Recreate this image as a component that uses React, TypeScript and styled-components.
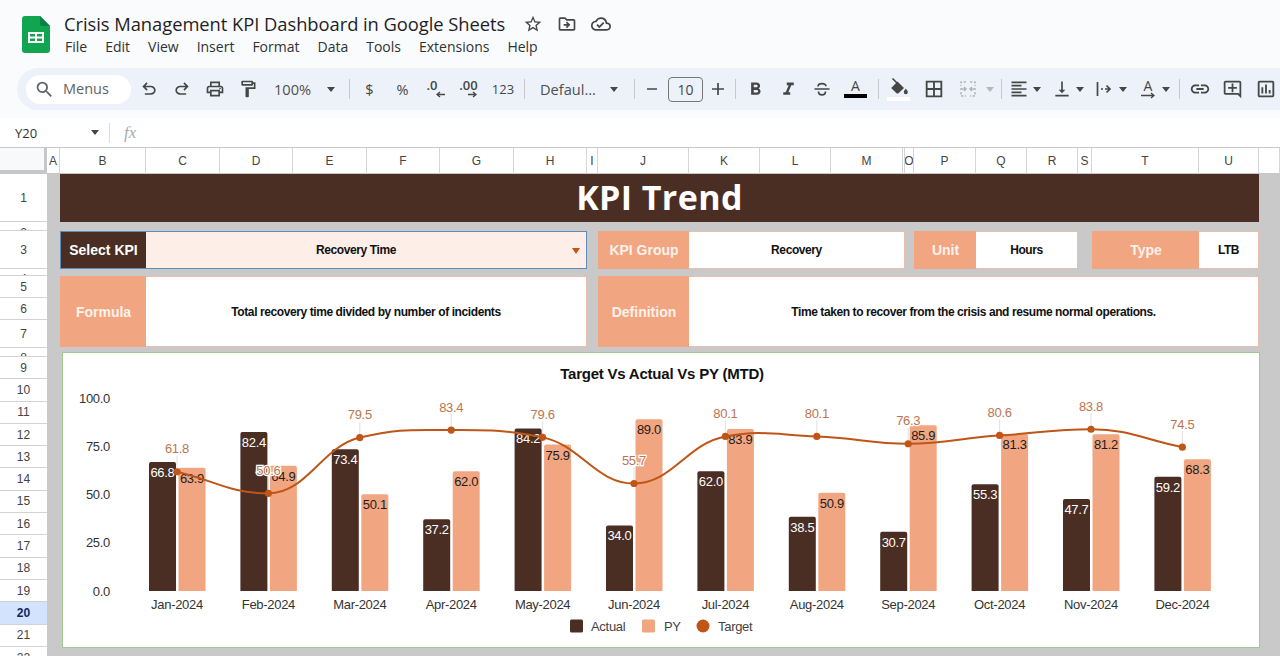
import React from 'react';
import styled, { createGlobalStyle } from 'styled-components';
import {
  MdBorderAll,
  MdFormatAlignLeft,
  MdFormatBold,
  MdFormatItalic,
  MdLink,
  MdOutlineAddComment,
  MdOutlineCloudDone,
  MdOutlineDriveFileMove,
  MdOutlineFormatPaint,
  MdOutlineInsertChart,
  MdOutlinePrint,
  MdSearch,
  MdStarBorder,
  MdVerticalAlignBottom,
} from 'react-icons/md';

const DARK = '#4a2e23';
const SALMON = '#f1a681';
const ORANGE = '#bf5516';
const INK = '#444746';

const COLUMNS =
  '13px 86px 74px 73px 74px 73px 74px 73px 11px 91px 71px 71px 72px 2px 9px 62px 51px 51px 14px 107px 60px 1fr';

const GlobalStyle = createGlobalStyle`
  html, body {
    margin: 0;
    padding: 0;
    height: 100%;
    overflow: hidden;
    background: #fff;
  }
  * { box-sizing: border-box; }
`;

const Page = styled.div`
  width: 1280px;
  height: 656px;
  overflow: hidden;
  display: flex;
  flex-direction: column;
  font-family: 'Liberation Sans', Arial, sans-serif;
`;

/* title + menus + toolbar */
const TopBar = styled.header`
  height: 118px;
  flex: none;
  background: #f9fbfd;
`;

const DocRow = styled.div`
  height: 68px;
  display: flex;
  padding-left: 22px;
`;

const Logo = styled.svg`
  width: 28px;
  height: 37px;
  margin-top: 16px;
  flex: none;
`;

const DocInfo = styled.div`
  margin-left: 14px;
  padding-top: 11px;
`;

const TitleLine = styled.div`
  display: flex;
  align-items: center;
  height: 25px;
`;

const DocTitle = styled.h1`
  margin: 0;
  font-family: 'Open Sans', sans-serif;
  font-size: 18.37px;
  font-weight: 400;
  letter-spacing: -0.05px;
  color: #1f1f1f;
  white-space: nowrap;
`;

const TitleActions = styled.div`
  display: flex;
  gap: 14px;
  margin-left: 18px;
  font-size: 20px;
  color: ${INK};

  svg { display: block; }
`;

const MenuBar = styled.nav`
  display: flex;
  gap: 18px;
  margin-top: 1px;
  padding-left: 1px;
  font-family: 'Open Sans', sans-serif;
  font-size: 14px;
  line-height: 20px;
  color: #303134;
`;

const Toolbar = styled.div`
  height: 42px;
  margin-left: 17px;
  padding-left: 9px;
  display: flex;
  align-items: center;
  background: #edf2fa;
  border-radius: 21px 0 0 21px;
  overflow: hidden;
  color: ${INK};
`;

const SearchPill = styled.div`
  width: 105px;
  height: 29px;
  margin-right: 1px;
  padding-left: 8px;
  flex: none;
  display: flex;
  align-items: center;
  gap: 8px;
  background: #fff;
  border-radius: 15px;
  font-family: 'Open Sans', sans-serif;
  font-size: 14.5px;
  line-height: 26px;
  color: #5f6368;
`;

const ToolButton = styled.div<{ $w?: number; $size?: number; $muted?: boolean }>`
  width: ${(p) => p.$w ?? 33}px;
  height: 28px;
  flex: none;
  display: flex;
  align-items: center;
  justify-content: center;
  font-size: ${(p) => p.$size ?? 20}px;
  color: ${(p) => (p.$muted ? '#b4b7ba' : INK)};
`;

const SplitButton = styled.div<{ $pad: number; $gap: number; $w: number }>`
  width: ${(p) => p.$w}px;
  padding-left: ${(p) => p.$pad}px;
  flex: none;
  display: flex;
  align-items: center;
  gap: ${(p) => p.$gap}px;
  font-size: 20px;
`;

const Caret = styled.span<{ $muted?: boolean }>`
  width: 0;
  height: 0;
  margin: 0 1px;
  flex: none;
  border-left: 4px solid transparent;
  border-right: 4px solid transparent;
  border-top: 5px solid ${(p) => (p.$muted ? '#b4b7ba' : INK)};
`;

const Divider = styled.span<{ $l: number; $r: number }>`
  width: 1px;
  height: 20px;
  flex: none;
  margin: 0 ${(p) => p.$r}px 0 ${(p) => p.$l}px;
  background: #c7c9cc;
`;

const TextDrop = styled.div<{ $w: number; $pad: number; $tail: number }>`
  width: ${(p) => p.$w}px;
  height: 26px;
  padding-left: ${(p) => p.$pad}px;
  flex: none;
  display: flex;
  align-items: center;
  justify-content: space-between;
  padding-right: ${(p) => p.$tail}px;
  font-family: 'Open Sans', sans-serif;
  font-size: 14.6px;
  color: #4d5053;
`;

const GlyphText = styled.span<{ $size?: number }>`
  font-family: 'Open Sans', sans-serif;
  font-size: ${(p) => p.$size ?? 13}px;
  color: ${INK};
`;

const StackGlyph = styled.div`
  display: flex;
  flex-direction: column;
  align-items: center;
  font-family: 'Open Sans', sans-serif;
  line-height: 12px;
  font-size: 14px;
  color: ${INK};

  svg { display: block; }
`;

const DecimalGlyph = styled.div`
  display: flex;
  flex-direction: column;
  align-items: flex-start;
  font-family: 'Open Sans', sans-serif;
  line-height: 11px;
  font-size: 13px;
  font-weight: 600;
  color: ${INK};

  svg {
    display: block;
    margin-left: 9px;
  }
`;

const ColorBar = styled.span<{ $color: string }>`
  display: block;
  width: 23px;
  height: 4px;
  margin-top: 2px;
  background: ${(p) => p.$color};
`;

const FontSizeBox = styled.div`
  width: 35px;
  height: 25px;
  flex: none;
  display: flex;
  align-items: center;
  justify-content: center;
  border: 1px solid #747775;
  border-radius: 4px;
  font-family: 'Open Sans', sans-serif;
  font-size: 14px;
  color: ${INK};
`;

/* name box + fx */
const FormulaBar = styled.div`
  height: 30px;
  flex: none;
  display: flex;
  align-items: center;
  padding-left: 15px;
  background: #fff;
  border-bottom: 1px solid #c7c7c7;
`;

const NameBox = styled.div`
  width: 85px;
  display: flex;
  align-items: center;
  justify-content: space-between;
  font-family: 'Open Sans', sans-serif;
  font-size: 13px;
  color: #333;
`;

const BarRule = styled.span`
  width: 1px;
  height: 20px;
  margin: 0 14px 0 9px;
  background: #dadce0;
`;

const FxLabel = styled.span`
  font-family: 'Liberation Serif', serif;
  font-style: italic;
  font-size: 17px;
  color: #a9abad;
`;

/* column letters */
const ColumnHeader = styled.div`
  height: 26px;
  flex: none;
  display: grid;
  grid-template-columns: 47px ${COLUMNS};
  background: #fff;
`;

const Corner = styled.div`
  background: #f8f9fa;
  border-right: 3px solid #c7c7c7;
  border-bottom: 4px solid #c7c7c7;
`;

const ColumnCell = styled.div`
  display: flex;
  align-items: center;
  justify-content: center;
  overflow: hidden;
  border-right: 1px solid #d6d6d6;
  border-bottom: 1px solid #c7c7c7;
  font-size: 12px;
  color: #444;
`;

/* row numbers + cells */
const SheetBody = styled.div`
  flex: 1;
  min-height: 0;
  display: flex;
`;

const RowHeader = styled.div`
  width: 47px;
  flex: none;
  background: #fff;
`;

const RowCell = styled.div<{ $h: number; $clipTop?: number; $active?: boolean }>`
  height: ${(p) => p.$h}px;
  display: flex;
  justify-content: center;
  align-items: ${(p) => (p.$clipTop ? 'flex-start' : 'center')};
  padding-top: ${(p) => p.$clipTop ?? 0}px;
  overflow: hidden;
  border-bottom: 1px solid #d3d3d3;
  background: ${(p) => (p.$active ? '#d3e3fd' : '#fff')};
  font-size: 12px;
  line-height: 14px;
  font-weight: ${(p) => (p.$active ? 700 : 400)};
  color: ${(p) => (p.$active ? '#0b2a5c' : '#444')};
`;

const Sheet = styled.main`
  flex: 1;
  display: grid;
  grid-template-columns: ${COLUMNS};
  grid-template-rows: 48px 9px 38px 7px 71px 5px 296px;
  align-content: start;
  background: #c9c9c9;
`;

const Banner = styled.div`
  grid-column: 2 / 22;
  grid-row: 1;
  padding-bottom: 2px;
  display: flex;
  align-items: center;
  justify-content: center;
  background: ${DARK};
  font-family: 'Open Sans', sans-serif;
  font-size: 34px;
  font-weight: 700;
  letter-spacing: 0.4px;
  color: #fff;
`;

const Label = styled.div<{ $col: string; $row: number; $dark?: boolean }>`
  grid-column: ${(p) => p.$col};
  grid-row: ${(p) => p.$row};
  display: flex;
  align-items: center;
  justify-content: center;
  background: ${(p) => (p.$dark ? DARK : SALMON)};
  border: 1px solid ${(p) => (p.$dark ? '#5d8db8' : SALMON)};
  border-right: none;
  font-size: 14px;
  font-weight: 700;
  color: ${(p) => (p.$dark ? '#fff' : '#fdf1ea')};
`;

const Value = styled.div<{ $col: string; $row: number }>`
  grid-column: ${(p) => p.$col};
  grid-row: ${(p) => p.$row};
  display: flex;
  align-items: center;
  justify-content: center;
  background: #fff;
  border: 1px solid #e6bfae;
  border-left: none;
  font-size: 12px;
  font-weight: 700;
  letter-spacing: -0.41px;
  color: #111;
`;

const SelectValue = styled(Value)`
  padding-right: 20px;
  position: relative;
  background: #fdeee7;
  border: 1px solid #5d8db8;
  border-left: none;
`;

const SelectCaret = styled.span`
  position: absolute;
  right: 6px;
  top: 16px;
  border-left: 4.5px solid transparent;
  border-right: 4.5px solid transparent;
  border-top: 6px solid ${ORANGE};
`;

const ChartCard = styled.section`
  grid-column: 2 / 22;
  grid-row: 7;
  margin: 0 -1px 0 2px;
  background: #fff;
  border: 1px solid #a5c98c;
`;

const ChartSvg = styled.svg`
  display: block;
  width: 100%;
  height: 100%;
  font-family: 'Liberation Sans', Arial, sans-serif;
  font-size: 13px;
  letter-spacing: -0.3px;
`;

const ChartTitle = styled.text`
  font-size: 15px;
  font-weight: 700;
  letter-spacing: -0.22px;
  fill: #111;
  text-anchor: middle;
`;

const AxisText = styled.text<{ $anchor: string }>`
  fill: #333;
  text-anchor: ${(p) => p.$anchor};
`;

const BarLabel = styled.text<{ $light?: boolean }>`
  fill: ${(p) => (p.$light ? '#fff' : '#1c1c1c')};
  text-anchor: middle;
`;

const TargetLabel = styled.text`
  fill: #bc7550;
  stroke: #fff;
  stroke-width: 2.5px;
  paint-order: stroke;
  text-anchor: middle;
`;

const LegendText = styled.text`
  fill: #444;
`;

type Month = { name: string; actual: number; py: number; target: number };

const months: Month[] = [
  { name: 'Jan-2024', actual: 66.8, py: 63.9, target: 61.8 },
  { name: 'Feb-2024', actual: 82.4, py: 64.9, target: 50.6 },
  { name: 'Mar-2024', actual: 73.4, py: 50.1, target: 79.5 },
  { name: 'Apr-2024', actual: 37.2, py: 62.0, target: 83.4 },
  { name: 'May-2024', actual: 84.2, py: 75.9, target: 79.6 },
  { name: 'Jun-2024', actual: 34.0, py: 89.0, target: 55.7 },
  { name: 'Jul-2024', actual: 62.0, py: 83.9, target: 80.1 },
  { name: 'Aug-2024', actual: 38.5, py: 50.9, target: 80.1 },
  { name: 'Sep-2024', actual: 30.7, py: 85.9, target: 76.3 },
  { name: 'Oct-2024', actual: 55.3, py: 81.3, target: 80.6 },
  { name: 'Nov-2024', actual: 47.7, py: 81.2, target: 83.8 },
  { name: 'Dec-2024', actual: 59.2, py: 68.3, target: 74.5 },
];

const BASE_Y = 591;
const UNIT = 1.93;
const yOf = (v: number) => BASE_Y - v * UNIT;
const xOf = (i: number) => 177 + i * 91.4;

// smooth curve, the tangent goes flat on local highs and lows
function targetPath(values: number[]) {
  const pts = values.map((v, i) => ({ x: xOf(i), y: yOf(v) }));
  const slopes = pts.slice(1).map((p, i) => (p.y - pts[i].y) / (p.x - pts[i].x));
  const tangents = pts.map((_, i) => {
    if (i === 0) return slopes[0];
    if (i === pts.length - 1) return slopes[i - 1];
    const a = slopes[i - 1];
    const b = slopes[i];
    return a * b < 0 ? 0 : ((a + b) / 2) * 0.7;
  });
  let d = `M${pts[0].x} ${pts[0].y}`;
  for (let i = 0; i < pts.length - 1; i++) {
    const dx = (pts[i + 1].x - pts[i].x) * 0.42;
    d += `C${pts[i].x + dx} ${pts[i].y + tangents[i] * dx} ${pts[i + 1].x - dx} ${
      pts[i + 1].y - tangents[i + 1] * dx
    } ${pts[i + 1].x} ${pts[i + 1].y}`;
  }
  return d;
}

function barTop(x: number, w: number, top: number) {
  return `M${x} ${BASE_Y}V${top + 2}Q${x} ${top} ${x + 2} ${top}H${x + w - 2}Q${x + w} ${top} ${x + w} ${top + 2}V${BASE_Y}Z`;
}

const TrendChart: React.FC = () => (
  <ChartSvg viewBox="63 353 1196 294">
    <ChartTitle x="662" y="378.5">Target Vs Actual Vs PY (MTD)</ChartTitle>

    {[100, 75, 50, 25, 0].map((v) => (
      <AxisText key={v} $anchor="end" x="110" y={yOf(v) + 4.5}>
        {v.toFixed(1)}
      </AxisText>
    ))}

    {months.map((m, i) => (
      <g key={m.name}>
        <path d={barTop(xOf(i) - 28, 27, yOf(m.actual))} fill={DARK} />
        <path d={barTop(xOf(i) + 1.5, 27, yOf(m.py))} fill={SALMON} />
        <AxisText $anchor="middle" x={xOf(i)} y="608.5">{m.name}</AxisText>
      </g>
    ))}

    {months.map((m, i) => (
      <g key={m.name}>
        <BarLabel $light x={xOf(i) - 14.5} y={yOf(m.actual) + 15}>{m.actual.toFixed(1)}</BarLabel>
        <BarLabel x={xOf(i) + 15} y={yOf(m.py) + 15}>{m.py.toFixed(1)}</BarLabel>
        <line x1={xOf(i)} x2={xOf(i)} y1={yOf(m.target) - 16} y2={yOf(m.target)} stroke="#d9d9d9" strokeWidth="0.8" />
      </g>
    ))}

    <path d={targetPath(months.map((m) => m.target))} fill="none" stroke={ORANGE} strokeWidth="2" />

    {months.map((m, i) => (
      <g key={m.name}>
        <circle cx={xOf(i)} cy={yOf(m.target)} r="3.6" fill={ORANGE} />
        <TargetLabel x={xOf(i)} y={yOf(m.target) - 18.5}>{m.target.toFixed(1)}</TargetLabel>
      </g>
    ))}

    <rect x="570" y="619.5" width="13" height="13" rx="1.5" fill={DARK} />
    <LegendText x="591" y="630.5">Actual</LegendText>
    <rect x="642" y="619.5" width="13" height="13" rx="1.5" fill={SALMON} />
    <LegendText x="664" y="630.5">PY</LegendText>
    <circle cx="703" cy="626" r="6.5" fill={ORANGE} />
    <LegendText x="718" y="630.5">Target</LegendText>
  </ChartSvg>
);

const SheetsLogo = () => (
  <Logo viewBox="0 0 28 37">
    <path d="M3 0H18L28 10V34a3 3 0 0 1-3 3H3a3 3 0 0 1-3-3V3a3 3 0 0 1 3-3Z" fill="#11a551" />
    <path d="M18 0L28 10H20a2 2 0 0 1-2-2Z" fill="#0b8043" />
    <path d="M6 16H22V27H6ZM8 18V20.5H13V18ZM15 18V20.5H20V18ZM8 22.5V25H13V22.5ZM15 22.5V25H20V22.5Z" fill="#fff" fillRule="evenodd" />
  </Logo>
);

const UndoIcon = ({ flip }: { flip?: boolean }) => (
  <svg width="20" height="20" viewBox="0 -960 960 960" fill="currentColor">
    <g transform={flip ? 'translate(960 0) scale(-1 1)' : undefined}>
      <path d="M280-200v-80h284q63 0 109.5-40T720-420q0-60-46.5-100T564-560H312l104 104-56 56-200-200 200-200 56 56-104 104h252q97 0 166.5 63T800-420q0 94-69.5 157T564-200H280Z" />
    </g>
  </svg>
);

const StrikeIcon = () => (
  <svg width="20" height="20" viewBox="0 0 20 20" fill="none" stroke="currentColor" strokeWidth="1.7">
    <path d="M6 7.5C6 3.6 14 3.6 14 7.2M2.5 10H17.5M6.5 12.5C6.5 17 13.5 17 13.5 12.5" />
  </svg>
);

const FillIcon = () => (
  <svg width="20" height="17" viewBox="0 0 20 17" fill="currentColor">
    <path d="M3.5 0.5L9 6" stroke="currentColor" strokeWidth="1.6" fill="none" />
    <path d="M8.5 3.5L15 10L9.5 15.2Q8.5 16 7.5 15.2L2.2 10Z" />
    <path d="M16.8 10.5C18 12.2 18.8 13 18.8 14.2A2 2 0 0 1 14.8 14.2C14.8 13 15.6 12.2 16.8 10.5Z" />
  </svg>
);

const MergeIcon = () => (
  <svg width="20" height="20" viewBox="0 0 20 20" fill="none" stroke="currentColor" strokeWidth="1.5">
    <path d="M8 3H3V7M3 9V11M3 13V17H8M12 3H17V7M17 9V11M17 13V17H12" strokeDasharray="2.5 1.5" />
    <path d="M3 10H8M6 8L8 10L6 12M17 10H12M14 8L12 10L14 12" />
  </svg>
);

const WrapIcon = () => (
  <svg width="20" height="20" viewBox="0 0 20 20" fill="none" stroke="currentColor" strokeWidth="1.7">
    <path d="M3.5 3V17M7 10H9M11 10H16M12.5 6.5L16 10L12.5 13.5" />
  </svg>
);

const ArrowLine = ({ dir, width = 13 }: { dir: 'left' | 'right'; width?: number }) => (
  <svg width={width} height="7" viewBox={`0 0 ${width} 7`} fill="none" stroke="currentColor" strokeWidth="1.4">
    {dir === 'left' ? (
      <path d={`M${width} 3.5H1M4 1L1 3.5L4 6`} />
    ) : (
      <path d={`M0 3.5H${width - 1}M${width - 4} 1L${width - 1} 3.5L${width - 4} 6`} />
    )}
  </svg>
);

const rowList: { n: number; h: number; clipTop?: number }[] = [
  { n: 1, h: 48 },
  { n: 2, h: 9, clipTop: 4 },
  { n: 3, h: 38 },
  { n: 4, h: 7, clipTop: 3 },
  { n: 5, h: 22 },
  { n: 6, h: 22 },
  { n: 7, h: 28 },
  { n: 8, h: 9, clipTop: 3 },
  ...[9, 10, 11, 12, 13, 14, 15, 16, 17, 18, 19, 20, 21].map((n) => ({ n, h: 22.3 })),
  { n: 22, h: 22, clipTop: 4 },
];

const columnLetters = 'A B C D E F G H I J K L M _ O P Q R S T U _'.split(' ');

const menus = ['File', 'Edit', 'View', 'Insert', 'Format', 'Data', 'Tools', 'Extensions', 'Help'];

export default function App() {
  return (
    <Page>
      <GlobalStyle />

      <TopBar>
        <DocRow>
          <SheetsLogo />
          <DocInfo>
            <TitleLine>
              <DocTitle>Crisis Management KPI Dashboard in Google Sheets</DocTitle>
              <TitleActions>
                <MdStarBorder />
                <MdOutlineDriveFileMove />
                <MdOutlineCloudDone />
              </TitleActions>
            </TitleLine>
            <MenuBar>
              {menus.map((m) => (
                <span key={m}>{m}</span>
              ))}
            </MenuBar>
          </DocInfo>
        </DocRow>

        <Toolbar>
          <SearchPill>
            <MdSearch size={21} />
            Menus
          </SearchPill>
          <ToolButton $w={34}><UndoIcon /></ToolButton>
          <ToolButton $w={32}><UndoIcon flip /></ToolButton>
          <ToolButton><MdOutlinePrint /></ToolButton>
          <ToolButton><MdOutlineFormatPaint /></ToolButton>
          <TextDrop $w={77} $pad={10} $tail={5}>
            100%
            <Caret />
          </TextDrop>
          <Divider $l={8} $r={3} />
          <ToolButton><GlyphText $size={14.5}>$</GlyphText></ToolButton>
          <ToolButton><GlyphText $size={14.5}>%</GlyphText></ToolButton>
          <ToolButton>
            <DecimalGlyph>
              .0
              <ArrowLine dir="left" width={9} />
            </DecimalGlyph>
          </ToolButton>
          <ToolButton>
            <DecimalGlyph>
              .00
              <ArrowLine dir="right" width={9} />
            </DecimalGlyph>
          </ToolButton>
          <ToolButton $w={36}><GlyphText>123</GlyphText></ToolButton>
          <Divider $l={3} $r={3} />
          <TextDrop $w={98} $pad={12} $tail={7}>
            Defaul...
            <Caret />
          </TextDrop>
          <Divider $l={8} $r={0} />
          <ToolButton><svg width="14" height="14" viewBox="0 0 14 14" stroke="currentColor" strokeWidth="1.7"><path d="M2 7H12" /></svg></ToolButton>
          <FontSizeBox>10</FontSizeBox>
          <ToolButton $w={29}><svg width="14" height="14" viewBox="0 0 14 14" stroke="currentColor" strokeWidth="1.7"><path d="M1 7H13M7 1V13" /></svg></ToolButton>
          <Divider $l={3} $r={3} />
          <ToolButton $size={21}><MdFormatBold /></ToolButton>
          <ToolButton $size={21}><MdFormatItalic /></ToolButton>
          <ToolButton><StrikeIcon /></ToolButton>
          <ToolButton $w={35}>
            <StackGlyph>
              A
              <ColorBar $color="#000" />
            </StackGlyph>
          </ToolButton>
          <Divider $l={5} $r={3} />
          <ToolButton>
            <StackGlyph>
              <FillIcon />
              <ColorBar $color="#fff" />
            </StackGlyph>
          </ToolButton>
          <ToolButton $w={37} $size={22}><MdBorderAll /></ToolButton>
          <ToolButton $w={32} $muted><MergeIcon /></ToolButton>
          <ToolButton $w={12}><Caret $muted /></ToolButton>
          <Divider $l={5} $r={0} />
          <SplitButton $w={45} $pad={7} $gap={3}><MdFormatAlignLeft /><Caret /></SplitButton>
          <SplitButton $w={43} $pad={5} $gap={3}><MdVerticalAlignBottom /><Caret /></SplitButton>
          <SplitButton $w={44} $pad={4} $gap={4}><WrapIcon /><Caret /></SplitButton>
          <SplitButton $w={41} $pad={7} $gap={6}>
            <StackGlyph>
              A
              <ArrowLine dir="right" width={14} />
            </StackGlyph>
            <Caret />
          </SplitButton>
          <Divider $l={4} $r={3} />
          <ToolButton $size={22}><MdLink /></ToolButton>
          <ToolButton $size={21}><MdOutlineAddComment /></ToolButton>
          <ToolButton $size={22}><MdOutlineInsertChart /></ToolButton>
        </Toolbar>
      </TopBar>

      <FormulaBar>
        <NameBox>
          Y20
          <Caret />
        </NameBox>
        <BarRule />
        <FxLabel>fx</FxLabel>
      </FormulaBar>

      <ColumnHeader>
        <Corner />
        {columnLetters.map((c, i) => (
          <ColumnCell key={i}>{c === '_' ? '' : c}</ColumnCell>
        ))}
      </ColumnHeader>

      <SheetBody>
        <RowHeader>
          {rowList.map((r) => (
            <RowCell key={r.n} $h={r.h} $clipTop={r.clipTop} $active={r.n === 20}>
              {r.n}
            </RowCell>
          ))}
        </RowHeader>

        <Sheet>
          <Banner>KPI Trend</Banner>

          <Label $col="2 / 3" $row={3} $dark>Select KPI</Label>
          <SelectValue $col="3 / 9" $row={3}>
            Recovery Time
            <SelectCaret />
          </SelectValue>
          <Label $col="10 / 11" $row={3}>KPI Group</Label>
          <Value $col="11 / 15" $row={3}>Recovery</Value>
          <Label $col="16 / 17" $row={3}>Unit</Label>
          <Value $col="17 / 19" $row={3}>Hours</Value>
          <Label $col="20 / 21" $row={3}>Type</Label>
          <Value $col="21 / 22" $row={3}>LTB</Value>

          <Label $col="2 / 3" $row={5}>Formula</Label>
          <Value $col="3 / 9" $row={5}>Total recovery time divided by number of incidents</Value>
          <Label $col="10 / 11" $row={5}>Definition</Label>
          <Value $col="11 / 22" $row={5}>Time taken to recover from the crisis and resume normal operations.</Value>

          <ChartCard>
            <TrendChart />
          </ChartCard>
        </Sheet>
      </SheetBody>
    </Page>
  );
}
